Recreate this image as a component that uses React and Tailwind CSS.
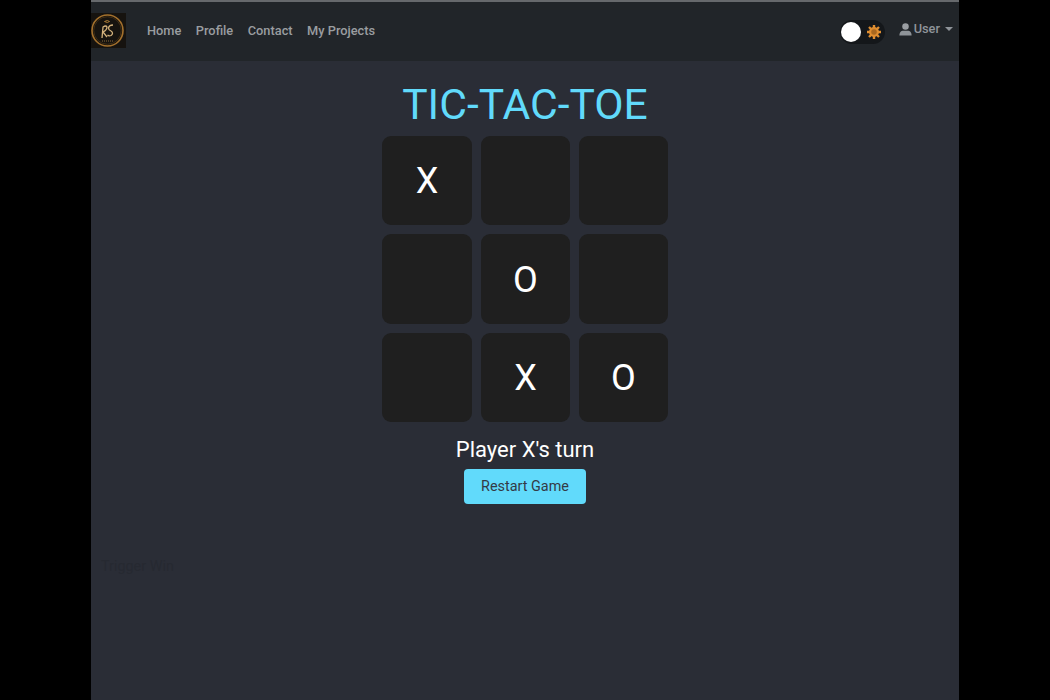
import React from "react";

function Logo() {
  return (
    <svg width="35" height="35" viewBox="0 0 35 35" className="shrink-0">
      <rect width="35" height="35" fill="#16130f" />
      <circle cx="16.5" cy="17.5" r="15.5" fill="none" stroke="#a3702c" strokeWidth="1.6" />
      <circle cx="16.5" cy="17.5" r="13.8" fill="none" stroke="#3f2d14" strokeWidth="1" />
      <path d="M13.5 8.5q3-2 5 0q-2 2-5 0z" fill="none" stroke="#a87a35" strokeWidth="1" />
      <path d="M11 25l1-11q3-2 4 0q0 3-4 5l4 5M22 12q-4 0-4.5 3q0 2 2.5 3q3 2 0 4.5q-2 1-3.5-.5" fill="none" stroke="#d3b27d" strokeWidth="1.3" />
      <path d="M11 28h11" stroke="#8a6a3a" strokeWidth="1" strokeDasharray="1 1" />
    </svg>
  );
}

function Gear() {
  return (
    <svg width="14" height="14" viewBox="0 0 14 14">
      <g stroke="#de8d30" strokeWidth="2.4">
        <path d="M7 0v14M0 7h14M2 2l10 10M12 2L2 12" />
      </g>
      <circle cx="7" cy="7" r="5" fill="#de8d30" />
      <circle cx="7" cy="7" r="2.8" fill="#a9681f" />
    </svg>
  );
}

function UserIcon() {
  return (
    <svg width="13" height="13" viewBox="0 0 16 16">
      <circle cx="8" cy="4.2" r="4" fill="#9a9ea2" />
      <path d="M0.5 15.5c0-4.5 2.5-6 4.5-6h6c2 0 4.5 1.5 4.5 6z" fill="#8f9499" />
    </svg>
  );
}

function Cell({ v }) {
  return (
    <div className="h-[89.4px] pt-[1px] bg-[#1f1f1f] rounded-[9px] flex items-center justify-center text-white text-[36px] leading-none">
      {v}
    </div>
  );
}

export default function App() {
  const cells = ["X", "", "", "", "O", "", "", "X", "O"];
  return (
    <div className="h-[700px] bg-black flex justify-center overflow-hidden font-['Roboto',sans-serif]">
      <div className="w-[868px] bg-[#2a2d36] flex flex-col">
        <div className="h-[2px] bg-[#66696c] shrink-0" />
        <nav className="h-[59px] bg-[#212529] flex items-center shrink-0">
          <div className="-mt-[2px]"><Logo /></div>
          <div className="flex items-center gap-[14.5px] ml-[21px] mb-[2px] text-[12.8px] font-medium text-[#9a9da0]">
            <span>Home</span>
            <span>Profile</span>
            <span>Contact</span>
            <span>My Projects</span>
          </div>
          <div className="ml-auto flex items-center">
            <div className="w-[45px] h-[24px] rounded-full bg-[#14171a] flex items-center justify-between pl-[1px] pr-[4px]">
              <div className="w-[20px] h-[20px] rounded-full bg-white" />
              <Gear />
            </div>
            <div className="flex items-center ml-[14px] mr-[6px] mb-[5px] text-[12.8px] font-medium text-[#8f9499]">
              <UserIcon />
              <span className="ml-[2px]">User</span>
              <span className="ml-[5px] w-0 h-0 border-x-[4px] border-x-transparent border-t-[4px] border-t-[#8f9499]" />
            </div>
          </div>
        </nav>
        <main className="flex flex-col items-center">
          <h1 className="text-[42.6px] leading-[50px] text-[#61dafb] mt-[18px]">TIC-TAC-TOE</h1>
          <div className="grid grid-cols-[90px_89px_89px] gap-[9px] mt-[7px]">
            {cells.map((c, i) => <Cell key={i} v={c} />)}
          </div>
          <p className="text-[22px] leading-[26px] text-white mt-[15px]">Player X's turn</p>
          <button className="mt-[6px] w-[122px] h-[35px] rounded-[4px] bg-[#61dafb] text-[#343a46] text-[14.4px] pt-[1px]">Restart Game</button>
        </main>
        <div className="mt-[53px] ml-[10px] text-[14.4px] leading-[19px] text-[#262931] self-start">Trigger Win</div>
      </div>
    </div>
  );
}
